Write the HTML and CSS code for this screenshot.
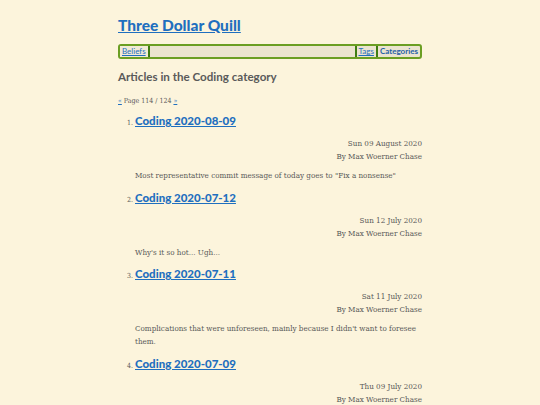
FILE: index.html
```html
<!DOCTYPE html>
<html>
<head>
<meta charset="utf-8">
<link rel="stylesheet" href="styles.css">
</head>
<body>
<div class="page">
  <h1 class="site-title"><a href="#">Three Dollar Quill</a></h1>
  <nav class="nav">
    <a class="nav-link first" href="#">Beliefs</a>
    <span class="nav-fill"></span>
    <a class="nav-link" href="#">Tags</a>
    <a class="nav-link current" href="#">Categories</a>
  </nav>
  <h2 class="section-title">Articles in the Coding category</h2>
  <p class="pager"><a href="#">«</a> Page 114 / 124 <a href="#">»</a></p>
  <ol class="articles">
    <li>
      <h3 class="art-title"><a href="#">Coding 2020-08-09</a></h3>
      <div class="meta"><div>Sun 09 August 2020</div><div>By Max Woerner Chase</div></div>
      <p class="summary">Most representative commit message of today goes to "Fix a nonsense"</p>
    </li>
    <li>
      <h3 class="art-title"><a href="#">Coding 2020-07-12</a></h3>
      <div class="meta"><div>Sun 12 July 2020</div><div>By Max Woerner Chase</div></div>
      <p class="summary">Why's it so hot... Ugh...</p>
    </li>
    <li>
      <h3 class="art-title"><a href="#">Coding 2020-07-11</a></h3>
      <div class="meta"><div>Sat 11 July 2020</div><div>By Max Woerner Chase</div></div>
      <p class="summary">Complications that were unforeseen, mainly because I didn't want to foresee them.</p>
    </li>
    <li>
      <h3 class="art-title"><a href="#">Coding 2020-07-09</a></h3>
      <div class="meta"><div>Thu 09 July 2020</div><div>By Max Woerner Chase</div></div>
    </li>
  </ol>
</div>
</body>
</html>
```
FILE: styles.css
```css
html, body {
  margin: 0;
  padding: 0;
  background: #fcf4dc;
}
body {
  font-family: "DejaVu Serif Condensed", "DejaVu Serif", serif;
  color: #585858;
  font-size: 8px;
}
.page {
  width: 304px;
  margin: 0 auto;
  padding-top: 13px;
}
a { color: #1f6fbf; }
.site-title {
  font-family: Lato, "Noto Sans", sans-serif;
  font-size: 15.5px;
  font-weight: 900;
  margin: 0;
  line-height: 24px;
}
.nav {
  display: flex;
  align-items: stretch;
  margin-top: 7px;
  border: 2px solid #6b9e23;
  border-radius: 3px;
  background: #ebe4cf;
  font-family: Lato, "Noto Sans", sans-serif;
  font-size: 8px;
  height: 11px;
}
.nav-link {
  padding: 0 2px;
  line-height: 11px;
  border-left: 2px solid #3f7d12;
}
.nav-link.first {
  border-left: none;
  border-right: 2px solid #3f7d12;
  background: #f1ead6;
}
.nav-fill { flex: 1; }
.nav-link.current {
  font-weight: 700;
  text-decoration: none;
  color: #1f5fa8;
}
.section-title {
  font-family: Lato, "Noto Sans", sans-serif;
  font-size: 11.6px;
  font-weight: 700;
  color: #5a5a5a;
  margin: 9px 0 0;
  line-height: 18px;
}
.pager {
  font-size: 7px;
  margin: 10px 0 0;
  line-height: 10px;
}
.articles {
  margin: 6px 0 0;
  padding-left: 17px;
}
.articles li {
  font-size: 7px;
}
.art-title {
  font-family: Lato, "Noto Sans", sans-serif;
  font-size: 11.5px;
  font-weight: 900;
  margin: 0;
  line-height: 18px;
}
.meta {
  text-align: right;
  font-size: 8px;
  line-height: 13px;
  margin-top: 7px;
}
.summary {
  font-size: 8px;
  line-height: 13px;
  margin: 6px 0 6.6px;
}
```
